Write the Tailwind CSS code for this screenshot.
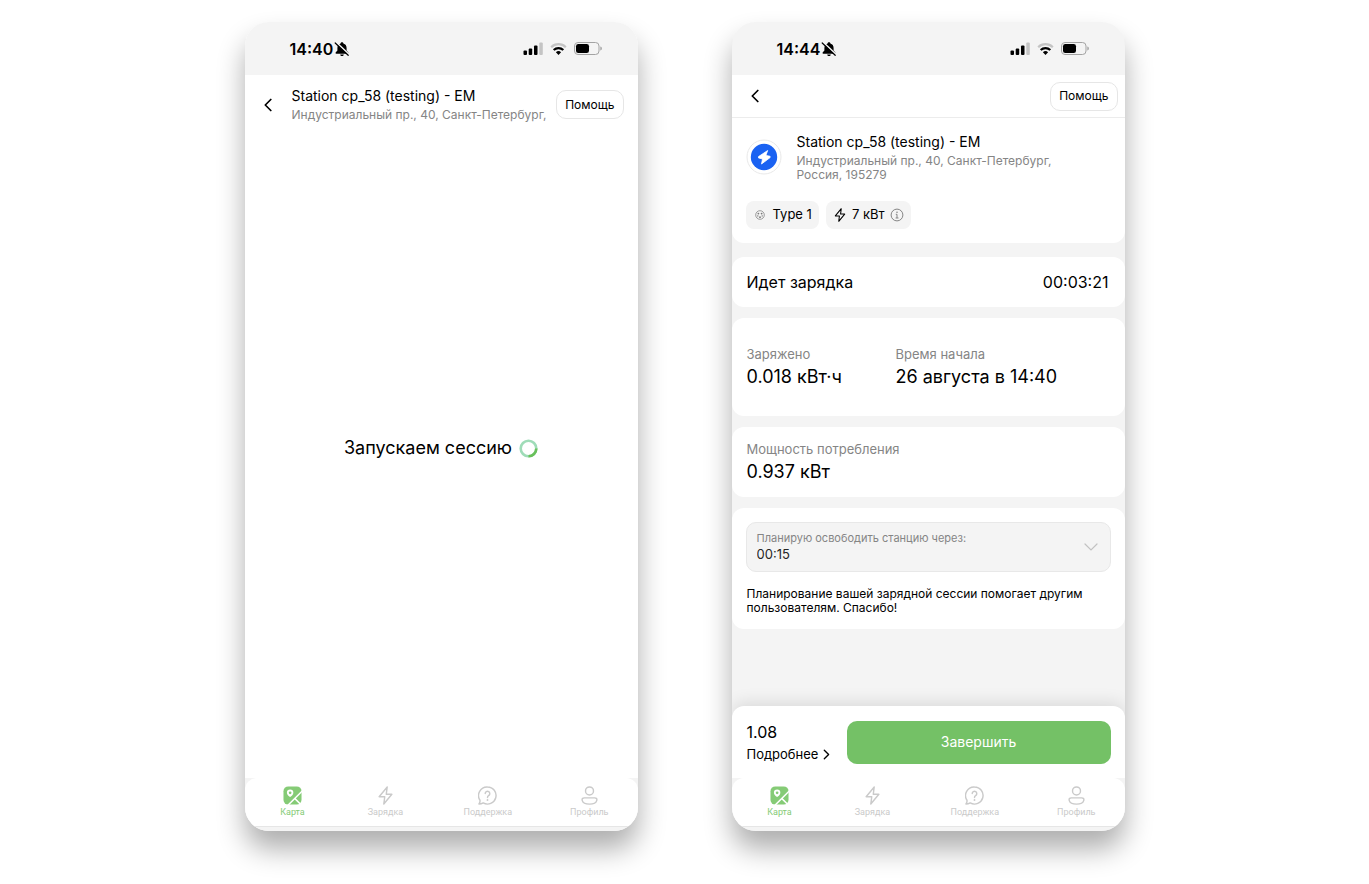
<!DOCTYPE html>
<html lang="ru">
<head>
    <meta charset="UTF-8">
    <meta name="viewport" content="width=device-width, initial-scale=1.0">
    <title>Зарядная сессия</title>
    <script src="https://cdn.jsdelivr.net/npm/@tailwindcss/browser@4"></script>
</head>
<body class="bg-white font-['Inter','Liberation_Sans',sans-serif] text-black">

    <!-- Shared icons -->
    <svg class="hidden" aria-hidden="true">
        <symbol id="bell-off" viewBox="0 0 16 16">
            <path d="M8 1.200c.8 0 1.300.5 1.400 1.200 2.100.6 3.200 2.200 3.200 4.500v2.300c0 .9 1.900 1.800 1.900 2.800 0 .5-.3.8-.9.8H2.400c-.6 0-.9-.3-.9-.8 0-1 1.900-1.900 1.900-2.800V6.900c0-2.300 1.100-3.900 3.200-4.500.1-.7.600-1.200 1.400-1.200zM6.200 13.400h3.600c-.1 1-.9 1.500-1.800 1.500s-1.700-.5-1.800-1.500z" fill="currentColor"/>
            <path d="M2.200 1.300l12.800 12" stroke="#f4f4f4" stroke-width="1.800"/>
            <path d="M1.200 2l13 12.300" stroke="currentColor" stroke-width="1.200" stroke-linecap="round"/>
        </symbol>
        <symbol id="signal" viewBox="0 0 20 13">
            <rect x=".5" y="8.500" width="3.500" height="4.500" rx="1"/>
            <rect x="5.700" y="6.500" width="3.500" height="6.500" rx="1"/>
            <rect x="11" y="3.500" width="3.500" height="9.500" rx="1"/>
            <rect x="16.300" y=".5" width="3.500" height="12.500" rx="1" fill="#c4c4c4"/>
        </symbol>
        <symbol id="wifi" viewBox="0 0 17 12">
            <path d="M1.200 4.200a10.400 10.400 0 0 1 14.600 0" fill="none" stroke="#c4c4c4" stroke-width="2.200"/>
            <path d="M3.700 7a6.900 6.900 0 0 1 9.600 0" fill="none" stroke="#000" stroke-width="2.200"/>
            <path d="M8.500 12 5.900 9.300a3.700 3.700 0 0 1 5.200 0z"/>
        </symbol>
        <symbol id="battery" viewBox="0 0 28 13">
            <rect x=".5" y=".5" width="24.500" height="12" rx="3.500" fill="none" stroke="#a3a3a3"/>
            <rect x="2" y="2" width="13" height="9" rx="2.300"/>
            <path d="M26.300 4.500c1 .3 1.600 1 1.600 2s-.6 1.700-1.600 2z" fill="#a3a3a3"/>
        </symbol>
        <symbol id="chevron" viewBox="0 0 8 14">
            <path d="M6.800 1.500 1.300 7l5.500 5.500" fill="none" stroke="currentColor" stroke-width="1.700" stroke-linecap="round" stroke-linejoin="round"/>
        </symbol>
        <symbol id="map" viewBox="0 0 20 20">
            <rect x=".5" y=".5" width="19" height="19" rx="5" fill="currentColor"/>
            <path d="M4.500 21 21 4.500M12.300 13l6.500 6.500" stroke="#fff" stroke-width="1.600" fill="none"/>
            <path d="M7.500 3.700a3.400 3.400 0 0 1 3.400 3.400c0 2-1.800 3.700-3.400 4.400-1.600-.7-3.400-2.400-3.400-4.400a3.400 3.400 0 0 1 3.400-3.400z" fill="#fff"/>
            <circle cx="7.500" cy="7.200" r="1.400" fill="currentColor"/>
        </symbol>
        <symbol id="bolt" viewBox="0 0 20 20">
            <path d="M11.800 1 3.300 11.300h5.900L8.200 19l8.500-10.300h-5.900z" fill="none" stroke="currentColor" stroke-width="1.500" stroke-linejoin="round"/>
        </symbol>
        <symbol id="help" viewBox="0 0 20 20">
            <path d="M10 1a9 9 0 1 1-4.500 16.800C4 18.700 2.500 19 1 19c.9-1.200 1.300-2.600 1.100-4A9 9 0 0 1 10 1z" fill="none" stroke="currentColor" stroke-width="1.500" stroke-linejoin="round"/>
            <path d="M7.600 8a2.400 2.400 0 1 1 3.600 2.100c-.8.5-1.200.9-1.200 2" fill="none" stroke="currentColor" stroke-width="1.500" stroke-linecap="round"/>
            <circle cx="10" cy="14.700" r="1" fill="currentColor"/>
        </symbol>
        <symbol id="user" viewBox="0 0 20 20">
            <circle cx="10" cy="5.200" r="4.200" fill="none" stroke="currentColor" stroke-width="1.500"/>
            <path d="M4.600 12.500h10.800c1.900 0 2.700 1 2.300 2.600-.7 2.600-3.500 4-7.700 4s-7-1.400-7.700-4c-.4-1.600.4-2.600 2.300-2.600z" fill="none" stroke="currentColor" stroke-width="1.500"/>
        </symbol>
    </svg>

    <main class="mx-auto grid min-h-screen w-full max-w-[880px] grid-cols-2 gap-[94px] pt-[22px] pb-[53px]">

        <!-- Session is starting -->
        <section class="flex flex-col overflow-hidden rounded-[24px] bg-white shadow-[0_18px_28px_rgba(0,0,0,0.32)]">
            <div class="flex h-[53px] shrink-0 items-center justify-between bg-[#f4f4f4] pr-9 pl-[45px]">
                <div class="flex items-center gap-px">
                    <span class="text-base font-semibold">14:40</span>
                    <svg class="size-4"><use href="#bell-off"/></svg>
                </div>
                <div class="flex items-center gap-[7px]">
                    <svg class="h-[13px] w-5"><use href="#signal"/></svg>
                    <svg class="h-3 w-[17px]"><use href="#wifi"/></svg>
                    <svg class="h-[13px] w-7"><use href="#battery"/></svg>
                </div>
            </div>

            <header class="flex items-center pt-2.5 pr-3.5 pl-4">
                <button type="button" aria-label="Назад" class="flex h-7 w-[31px] shrink-0 items-center pl-[3px]">
                    <svg class="h-3.5 w-2"><use href="#chevron"/></svg>
                </button>
                <div class="min-w-0 flex-1 overflow-hidden whitespace-nowrap">
                    <h1 class="text-sm leading-[21px]">Station cp_58 (testing) - EM</h1>
                    <p class="text-xs leading-[18px] text-[#858585]">Индустриальный пр., 40, Санкт-Петербург, </p>
                </div>
                <button type="button" class="h-[29px] shrink-0 rounded-[10px] border border-[#e6e6e6] bg-white px-2 text-xs">Помощь</button>
            </header>

            <div class="flex flex-1 items-center justify-center gap-[7px] pb-1.5">
                <p class="text-lg">Запускаем сессию</p>
                <svg class="size-[19px]" viewBox="0 0 19 19" fill="none" stroke-width="2.600">
                    <circle cx="9.500" cy="9.500" r="7.800" stroke="#9fdcb8"/>
                    <path d="M17.300 9.500a7.800 7.800 0 0 1-7.800 7.800" stroke="#69c05a"/>
                </svg>
            </div>

            <nav class="bg-[#f4f4f4] pb-1">
                <div class="flex h-[49px] items-center justify-between rounded-t-[12px] border-b border-[#e6e6e6] bg-white pr-[29px] pl-[33px] font-['Roboto',sans-serif] text-[9px] leading-3 text-[#cacaca]">
                    <a href="#" class="flex min-w-[30px] flex-col items-center gap-px text-[#85cb76]"><svg class="size-[19px]"><use href="#map"/></svg>Карта</a>
                    <a href="#" class="flex min-w-10 flex-col items-center gap-px"><svg class="size-[19px]"><use href="#bolt"/></svg>Зарядка</a>
                    <a href="#" class="flex flex-col items-center gap-px"><svg class="size-[19px]"><use href="#help"/></svg>Поддержка</a>
                    <a href="#" class="flex flex-col items-center gap-px"><svg class="size-[19px]"><use href="#user"/></svg>Профиль</a>
                </div>
            </nav>
        </section>

        <!-- Charging in progress -->
        <section class="flex flex-col overflow-hidden rounded-[24px] bg-[#f4f4f4] shadow-[0_18px_28px_rgba(0,0,0,0.32)]">
            <div class="flex h-[53px] shrink-0 items-center justify-between pr-9 pl-[45px]">
                <div class="flex items-center gap-px">
                    <span class="text-base font-semibold">14:44</span>
                    <svg class="size-4"><use href="#bell-off"/></svg>
                </div>
                <div class="flex items-center gap-[7px]">
                    <svg class="h-[13px] w-5"><use href="#signal"/></svg>
                    <svg class="h-3 w-[17px]"><use href="#wifi"/></svg>
                    <svg class="h-[13px] w-7"><use href="#battery"/></svg>
                </div>
            </div>

            <header class="flex h-[43px] items-center justify-between border-b border-[#ececec] bg-white pr-[7px] pl-4">
                <button type="button" aria-label="Назад" class="flex h-7 w-[31px] items-center pl-[3px]">
                    <svg class="h-3.5 w-2"><use href="#chevron"/></svg>
                </button>
                <button type="button" class="h-[29px] rounded-[10px] border border-[#e6e6e6] bg-white px-2 text-xs">Помощь</button>
            </header>

            <div class="rounded-b-[12px] bg-white px-3.5 pt-[13px] pb-3.5">
                <div class="flex gap-[15px]">
                    <svg class="mt-2 size-9 shrink-0" viewBox="0 0 36 36">
                        <circle cx="18" cy="18" r="17" fill="#fff" stroke="#e8e8e8"/>
                        <circle cx="18" cy="18" r="13.200" fill="#1a62f2"/>
                        <path d="M21.700 11.500 12.500 17.600v1.300l4 1.100-1 5 8.600-6.400v-1.300l-4.200-.9z" fill="#fff" stroke="#fff" stroke-width=".8" stroke-linejoin="round"/>
                    </svg>
                    <div class="min-w-0">
                        <h1 class="text-sm leading-[21px]">Station cp_58 (testing) - EM</h1>
                        <p class="mt-0.5 text-xs leading-[14px] text-[#858585]">Индустриальный пр., 40, Санкт-Петербург,<br>Россия, 195279</p>
                    </div>
                </div>
                <div class="mt-[19px] flex gap-[7px] text-[13px]">
                    <span class="flex h-7 items-center gap-2 rounded-[8px] bg-[#f4f4f4] px-[7px]">
                        <svg class="ml-0.5 size-2.5" viewBox="0 0 10 10" fill="none" stroke="#777">
                            <circle cx="5" cy="5" r="4.300" stroke-width=".7"/>
                            <g fill="#777" stroke="none"><circle cx="3.400" cy="3.600" r=".9"/><circle cx="6.600" cy="3.600" r=".9"/><circle cx="2.800" cy="5.900" r=".7"/><circle cx="7.200" cy="5.900" r=".7"/><circle cx="5" cy="7.200" r=".9"/></g>
                        </svg>
                        Type 1
                    </span>
                    <span class="flex h-7 items-center gap-[5px] rounded-[8px] bg-[#f4f4f4] px-[7px]">
                        <svg class="size-3.5"><use href="#bolt"/></svg>
                        7 кВт
                        <svg class="size-3.5" viewBox="0 0 14 14" fill="none" stroke="#858585">
                            <circle cx="7" cy="7" r="5.900"/>
                            <path d="M5.800 6.300H7v3.700M5.600 10h2.900"/>
                            <circle cx="7" cy="4.200" r=".8" fill="#858585" stroke="none"/>
                        </svg>
                    </span>
                </div>
            </div>

            <div class="mt-3.5 flex flex-col gap-[11px]">
                <div class="flex h-[50px] items-center justify-between rounded-[12px] bg-white pr-4 pl-[15px] text-base">
                    <h2>Идет зарядка</h2>
                    <time>00:03:21</time>
                </div>

                <dl class="flex rounded-[12px] bg-white px-[15px] py-[26px]">
                    <div class="w-[149px]">
                        <dt class="text-[13px] leading-5 text-[#858585]">Заряжено</dt>
                        <dd class="text-lg leading-[26px]">0.018 кВт·ч</dd>
                    </div>
                    <div>
                        <dt class="text-[13px] leading-5 text-[#858585]">Время начала</dt>
                        <dd class="text-lg leading-[26px]">26 августа в 14:40</dd>
                    </div>
                </dl>

                <dl class="rounded-[12px] bg-white px-[15px] py-3">
                    <dt class="text-[13px] leading-5 text-[#858585]">Мощность потребления</dt>
                    <dd class="text-lg leading-[26px]">0.937 кВт</dd>
                </dl>

                <div class="rounded-[12px] bg-white p-3.5">
                    <div class="relative rounded-[10px] border border-[#e8e8e8] bg-[#f4f4f4] px-2.5 pt-[7px] pb-[9px]">
                        <label for="release" class="block text-[11px] leading-4 text-[#858585]">Планирую освободить станцию через:</label>
                        <select id="release" class="block w-full appearance-none bg-transparent text-[13px] leading-4 text-[#262626] outline-none">
                            <option>00:15</option>
                        </select>
                        <svg class="pointer-events-none absolute top-1/2 right-3 h-2 w-3.5 -translate-y-1/2" viewBox="0 0 14 8" fill="none" stroke="#c2c2c2" stroke-width="1.200" stroke-linecap="round">
                            <path d="M1 1l6 6 6-6"/>
                        </svg>
                    </div>
                    <p class="mt-[15px] pl-px text-xs leading-[14px]">Планирование вашей зарядной сессии помогает другим<br>пользователям. Спасибо!</p>
                </div>
            </div>

            <!-- Cost and stop button -->
            <div class="mt-auto flex items-center rounded-t-[12px] bg-white p-3.5 shadow-[0_-4px_16px_rgba(0,0,0,0.1)]">
                <div class="w-[101px] shrink-0 pl-px">
                    <p class="text-base leading-6">1.08</p>
                    <a href="#" class="flex items-center gap-[5px] text-[13px] leading-5">Подробнее
                        <svg class="h-[11px] w-[7px] rotate-180"><use href="#chevron"/></svg>
                    </a>
                </div>
                <button type="button" class="h-[43px] flex-1 rounded-[10px] bg-[#74c166] text-sm text-white">Завершить</button>
            </div>

            <nav class="relative bg-[#f4f4f4] pb-1">
                <div class="flex h-[49px] items-center justify-between rounded-t-[12px] border-b border-[#e6e6e6] bg-white pr-[29px] pl-[33px] font-['Roboto',sans-serif] text-[9px] leading-3 text-[#cacaca]">
                    <a href="#" class="flex min-w-[30px] flex-col items-center gap-px text-[#85cb76]"><svg class="size-[19px]"><use href="#map"/></svg>Карта</a>
                    <a href="#" class="flex min-w-10 flex-col items-center gap-px"><svg class="size-[19px]"><use href="#bolt"/></svg>Зарядка</a>
                    <a href="#" class="flex flex-col items-center gap-px"><svg class="size-[19px]"><use href="#help"/></svg>Поддержка</a>
                    <a href="#" class="flex flex-col items-center gap-px"><svg class="size-[19px]"><use href="#user"/></svg>Профиль</a>
                </div>
            </nav>
        </section>
    </main>

</body>
</html>
